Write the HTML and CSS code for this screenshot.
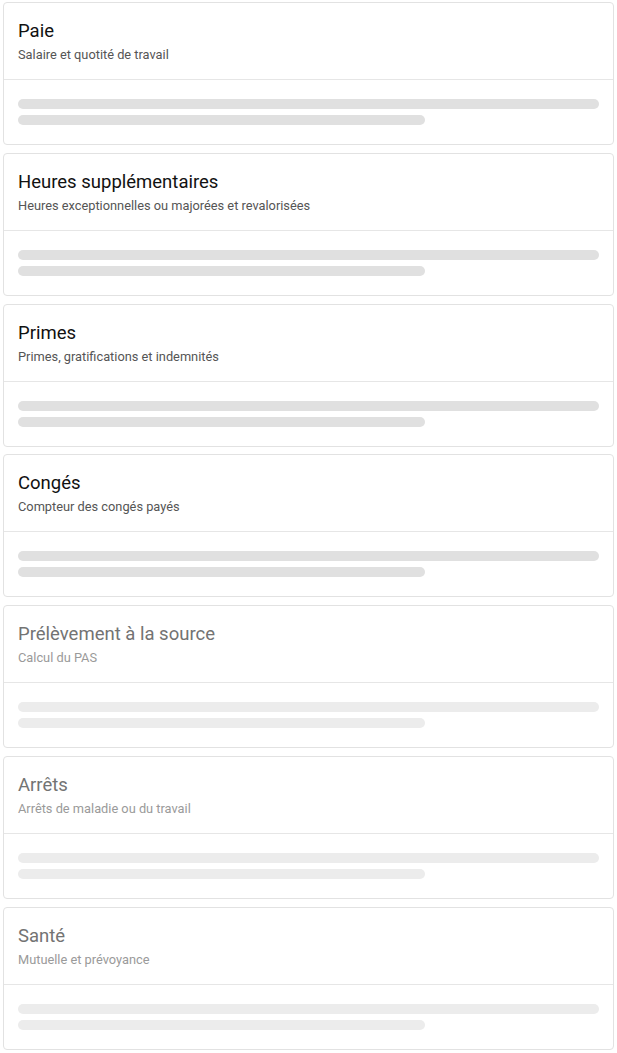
FILE: index.html
```html
<!DOCTYPE html>
<html lang="fr">
<head>
    <meta charset="UTF-8">
    <meta name="viewport" content="width=device-width, initial-scale=1.0">
    <title>Bulletin</title>
    <link rel="stylesheet" href="styles.css">
</head>
<body>
    <div class="list">
        <div class="card">
            <div class="card-head">
                <div class="card-title">Paie</div>
                <div class="card-sub">Salaire et quotité de travail</div>
            </div>
            <div class="card-body">
                <div class="bar"></div>
                <div class="bar short"></div>
            </div>
        </div>
        <div class="card">
            <div class="card-head">
                <div class="card-title">Heures supplémentaires</div>
                <div class="card-sub">Heures exceptionnelles ou majorées et revalorisées</div>
            </div>
            <div class="card-body">
                <div class="bar"></div>
                <div class="bar short"></div>
            </div>
        </div>
        <div class="card">
            <div class="card-head">
                <div class="card-title">Primes</div>
                <div class="card-sub">Primes, gratifications et indemnités</div>
            </div>
            <div class="card-body">
                <div class="bar"></div>
                <div class="bar short"></div>
            </div>
        </div>
        <div class="card">
            <div class="card-head">
                <div class="card-title">Congés</div>
                <div class="card-sub">Compteur des congés payés</div>
            </div>
            <div class="card-body">
                <div class="bar"></div>
                <div class="bar short"></div>
            </div>
        </div>
        <div class="card disabled">
            <div class="card-head">
                <div class="card-title">Prélèvement à la source</div>
                <div class="card-sub">Calcul du PAS</div>
            </div>
            <div class="card-body">
                <div class="bar"></div>
                <div class="bar short"></div>
            </div>
        </div>
        <div class="card disabled">
            <div class="card-head">
                <div class="card-title">Arrêts</div>
                <div class="card-sub">Arrêts de maladie ou du travail</div>
            </div>
            <div class="card-body">
                <div class="bar"></div>
                <div class="bar short"></div>
            </div>
        </div>
        <div class="card disabled">
            <div class="card-head">
                <div class="card-title">Santé</div>
                <div class="card-sub">Mutuelle et prévoyance</div>
            </div>
            <div class="card-body">
                <div class="bar"></div>
                <div class="bar short"></div>
            </div>
        </div>
    </div>
</body>
</html>
```

FILE: styles.css
```css
body{
    margin: 0;
    padding: 2px 3px;
    background: #fff;
    font-family: Roboto, "Liberation Sans", sans-serif;
}
.list{
    display: flex;
    flex-direction: column;
    gap: 7.8px;
}
.card{
    border: 1px solid #e2e2e2;
    border-radius: 4px;
    background: #fff;
}
.card-head{
    padding: 16px 14px 15px;
    border-bottom: 1px solid #e6e6e6;
}
.card-title{
    font-size: 18.5px;
    line-height: 24px;
    color: #111;
}
.card-sub{
    margin-top: 3px;
    font-size: 12.8px;
    line-height: 18px;
    color: #555;
}
.card-body{
    padding: 19px 14px;
    display: flex;
    flex-direction: column;
    gap: 6px;
}
.bar{
    height: 10px;
    border-radius: 5px;
    background: #e0e0e0;
}
.bar.short{
    width: 70%;
}
.disabled .card-title{
    color: #737373;
}
.disabled .card-sub{
    color: #9a9a9a;
}
.disabled .bar{
    background: #ececec;
}
```
